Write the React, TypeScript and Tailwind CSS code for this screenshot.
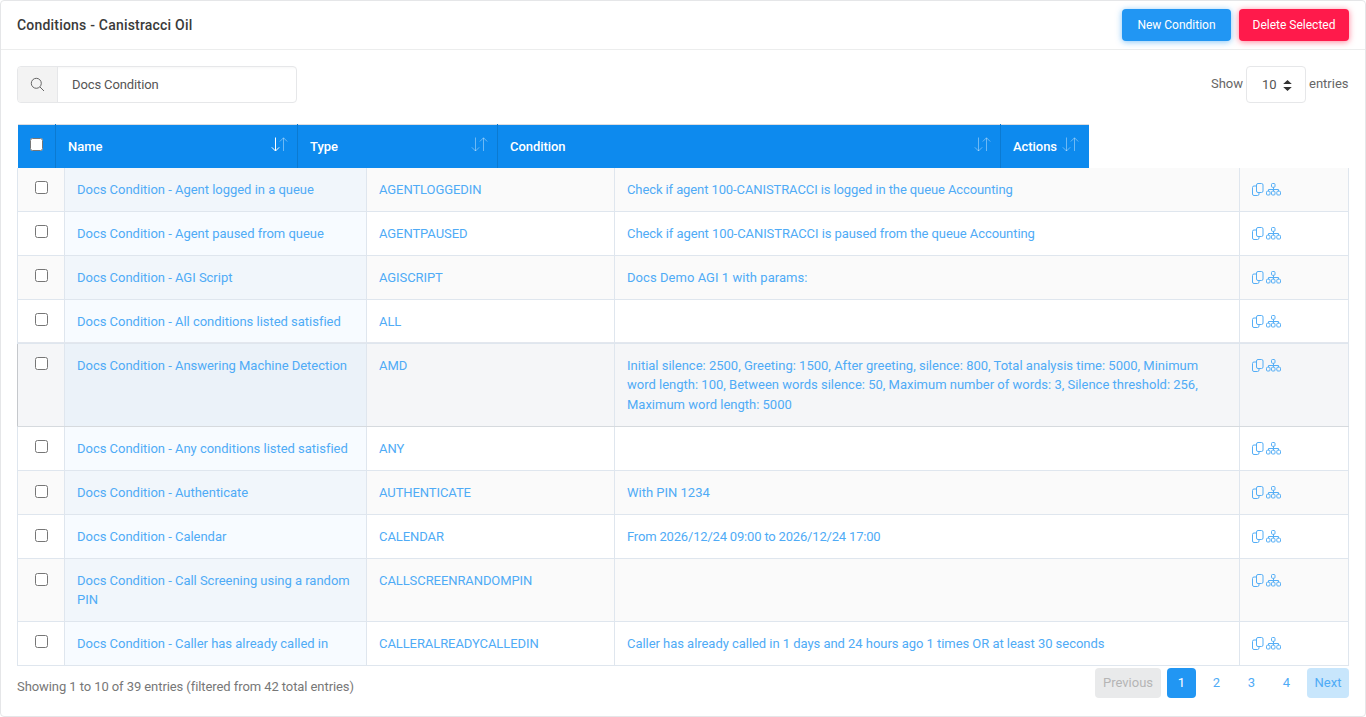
import React from "react";

const rows: { name: string; type: string; cond: string; tk: string; hover?: boolean; two?: boolean }[] = [
  { name: "Docs Condition - Agent logged in a queue", type: "AGENTLOGGEDIN", cond: "Check if agent 100-CANISTRACCI is logged in the queue Accounting", tk: "tracking-[-0.1px]" },
  { name: "Docs Condition - Agent paused from queue", type: "AGENTPAUSED", cond: "Check if agent 100-CANISTRACCI is paused from the queue Accounting", tk: "tracking-[-0.07px]" },
  { name: "Docs Condition - AGI Script", type: "AGISCRIPT", cond: "Docs Demo AGI 1 with params:", tk: "tracking-[0.05px]" },
  { name: "Docs Condition - All conditions listed satisfied", type: "ALL", cond: "", tk: "" },
  { name: "Docs Condition - Answering Machine Detection", type: "AMD", cond: "Initial silence: 2500, Greeting: 1500, After greeting, silence: 800, Total analysis time: 5000, Minimum word length: 100, Between words silence: 50, Maximum number of words: 3, Silence threshold: 256, Maximum word length: 5000", tk: "tracking-normal", hover: true },
  { name: "Docs Condition - Any conditions listed satisfied", type: "ANY", cond: "", tk: "" },
  { name: "Docs Condition - Authenticate", type: "AUTHENTICATE", cond: "With PIN 1234", tk: "tracking-normal" },
  { name: "Docs Condition - Calendar", type: "CALENDAR", cond: "From 2026/12/24 09:00 to 2026/12/24 17:00", tk: "tracking-[-0.18px]" },
  { name: "Docs Condition - Call Screening using a random PIN", type: "CALLSCREENRANDOMPIN", cond: "", tk: "", two: true },
  { name: "Docs Condition - Caller has already called in", type: "CALLERALREADYCALLEDIN", cond: "Caller has already called in 1 days and 24 hours ago 1 times OR at least 30 seconds", tk: "tracking-[-0.04px]" },
];

function CopyIcon() {
  return (
    <svg width="12" height="13" viewBox="0 0 12 13" fill="none" stroke="#55aef6" strokeWidth="1" className="block">
      <rect x="4.5" y="0.5" width="6.5" height="9" rx="1.5" />
      <path d="M4.5 3 H2 A1.5 1.5 0 0 0 .5 4.5 V11 A1.5 1.5 0 0 0 2 12.5 H5.5 A1.5 1.5 0 0 0 7 11 V9.5" />
    </svg>
  );
}

function TreeIcon() {
  return (
    <svg width="15" height="13" viewBox="0 0 15 13" fill="none" stroke="#55aef6" strokeWidth="1" className="block">
      <rect x="5.5" y="0.5" width="3.5" height="3.8" rx="1" />
      <path d="M7.5 4.3 V8 M2.5 8 V6.5 H12.5 V8" />
      <rect x="0.5" y="8.2" width="3.5" height="3.8" rx="1" />
      <rect x="5.5" y="8.2" width="3.5" height="3.8" rx="1" />
      <rect x="10.8" y="8.2" width="3.7" height="3.8" rx="1" />
    </svg>
  );
}

function SortIcon({ active }: { active?: boolean }) {
  return (
    <svg width="17" height="15" viewBox="0 0 17 15" fill="none" strokeWidth="1" className="block">
      <path stroke="#ffffff" strokeOpacity={active ? 1 : 0.4} d="M4.5 0.5 V14 M0.8 10.3 L4.5 14 L8.2 10.3" />
      <path stroke="#ffffff" strokeOpacity="0.4" d="M12.5 14 V0.8 M8.8 4.5 L12.5 0.8 L16.2 4.5" />
    </svg>
  );
}

function HeadCell({ label, w, active, iconGap }: { label: string; w: string; active?: boolean; iconGap?: boolean }) {
  return (
    <th className={`${w} h-[43px] border-r border-[#0b7ad1] p-0 pl-[12.5px] pr-[9px] text-left align-middle font-medium tracking-[-0.05px] last:border-r-0`}>
      <div className={`flex items-center ${iconGap ? "gap-[5px]" : "justify-between"}`}>
        <span className="pt-px">{label}</span>
        <span className="-mt-[3px]"><SortIcon active={active} /></span>
      </div>
    </th>
  );
}

export default function App() {
  return (
    <div className="h-[717px] w-[1366px] overflow-hidden bg-white font-['Roboto',sans-serif] text-[13px] leading-[19.5px] text-[#333]">
      <div className="h-[717px] rounded-[4px] border border-[#e5e6e8]">
        <div className="flex h-[49px] items-center justify-between border-b border-[#eceded] pl-4 pr-4">
          <h1 className="text-sm font-medium tracking-[0.2px] text-[#3a3a3a]">Conditions - Canistracci Oil</h1>
          <div className="flex gap-2">
            <button className="h-8 w-[109px] rounded-[4px] bg-[#2196f3] text-xs text-white shadow-[0_1px_6px_rgba(33,150,243,0.55)]">New Condition</button>
            <button className="h-8 w-[110px] rounded-[4px] bg-[#ff1a4b] text-xs text-white shadow-[0_1px_6px_rgba(255,23,68,0.55)]">Delete Selected</button>
          </div>
        </div>

        <div className="px-4 pt-4">
          <div className="flex items-start justify-between">
            <div className="flex h-[37px] w-[280px] overflow-hidden rounded-[4px] border border-[#e6e7e9]">
              <div className="flex w-10 items-center justify-center border-r border-[#e6e7e9] bg-[#f3f3f3]">
                <svg width="15" height="15" viewBox="0 0 15 15" fill="none" stroke="#666" strokeWidth="1">
                  <circle cx="6.3" cy="6.3" r="5" />
                  <path d="M10 10 L14 14" />
                </svg>
              </div>
              <input readOnly value="Docs Condition" className="min-w-0 flex-1 pl-[14px] text-[13px] tracking-[-0.12px] text-[#555] shadow-[inset_0_3px_3px_-2px_rgba(0,0,0,0.04)] outline-none" />
            </div>
            <div className="flex items-center text-[#666]">
              <span className="-mt-[2px]">Show</span>
              <div className="relative ml-[3px] mr-[3px] h-[37px] w-[60px]">
                <select defaultValue="10" className="h-full w-full appearance-none rounded-[4px] border border-[#e6e7e9] bg-white pl-[15px] text-[13px] text-[#555] outline-none">
                  <option value="10">10</option>
                </select>
                <svg width="9" height="11" viewBox="0 0 9 11" className="absolute right-[14px] top-[14px]" fill="#333">
                  <path d="M4.5 0 L8.8 4 H.2 Z M.2 7 H8.8 L4.5 11 Z" />
                </svg>
              </div>
              <span className="-mt-[2px] w-[40px]">entries</span>
            </div>
          </div>

          <table className="ml-px mt-[21px] table-fixed border-collapse border-t border-[#dcdde0] bg-[#0d8aee] text-white">
            <thead>
              <tr>
                <th className="h-[43px] w-[37px] border-r border-[#0b7ad1] p-0 align-middle">
                  <input type="checkbox" className="-mt-1 ml-[12px] block h-[13px] w-[13px]" />
                </th>
                <HeadCell label="Name" w="w-[242px]" active />
                <HeadCell label="Type" w="w-[200px]" />
                <HeadCell label="Condition" w="w-[503px]" />
                <HeadCell label="Actions" w="w-[89px]" iconGap />
              </tr>
            </thead>
          </table>

          <table className="w-[1331px] table-fixed border-collapse text-[#4fabf6]">
            <colgroup>
              <col className="w-[47px]" />
              <col className="w-[302px]" />
              <col className="w-[248px]" />
              <col className="w-[625px]" />
              <col className="w-[109px]" />
            </colgroup>
            <tbody>
              {rows.map((r, i) => {
                const odd = i % 2 === 0;
                const rowBg = r.hover ? "bg-[#f5f6f8]" : odd ? "bg-[#fafafa]" : "bg-white";
                const nameBg = r.hover ? "bg-[#ebf2f9]" : odd ? "bg-[#f1f6fb]" : "bg-[#f7fbff]";
                const pad = r.two ? "pt-3 pb-[11px]" : "pt-3 pb-[11.5px]";
                const edge = r.hover ? "border-b-[#d6dade]" : "";
                const boxTop = i >= 6 && i <= 8 ? "mt-[2px]" : "mt-px";
                return (
                  <tr key={r.name} className={`${rowBg} ${r.hover ? "shadow-[0_1px_0_#d6dade,0_-1px_0_#e3e7ee]" : ""}`}>
                    <td className={`border border-t-0 border-[#dfe6ee] px-0 align-top ${r.hover ? "border-l-[#c5c8cc]" : ""} ${edge} ${pad}`}>
                      <input type="checkbox" className={`ml-[17px] block h-[13px] w-[13px] ${boxTop}`} />
                    </td>
                    <td className={`${nameBg} border border-t-0 border-[#dfe6ee] px-3 align-top tracking-[-0.02px] ${edge} ${pad}`}>{r.name}</td>
                    <td className={`border border-t-0 border-[#dfe6ee] px-3 align-top tracking-[-0.08px] ${edge} ${pad}`}>{r.type}</td>
                    <td className={`border border-t-0 border-[#dfe6ee] px-3 align-top ${r.tk} ${edge} ${pad}`}>{r.cond}</td>
                    <td className={`border border-t-0 border-[#dfe6ee] px-3 align-top ${edge} ${pad}`}>
                      <div className="flex items-start gap-[2px] pt-[3px]">
                        <CopyIcon />
                        <TreeIcon />
                      </div>
                    </td>
                  </tr>
                );
              })}
            </tbody>
          </table>

          <div className="flex items-start justify-between pt-[2px]">
            <div className="pt-[9px] tracking-[-0.08px] text-[#777]">Showing 1 to 10 of 39 entries (filtered from 42 total entries)</div>
            <div className="flex items-center">
              <span className="flex h-[30px] w-[66px] items-center justify-center rounded-[4px] bg-[#e9eaeb] pt-px text-[#b5b5b5]">Previous</span>
              <span className="ml-[6px] flex h-[30px] w-[29px] items-center justify-center rounded-[4px] bg-[#2196f3] pt-px text-white">1</span>
              <span className="ml-[6px] flex h-[30px] w-[29px] items-center justify-center pt-px text-[#4fabf6]">2</span>
              <span className="ml-[6px] flex h-[30px] w-[29px] items-center justify-center pt-px text-[#4fabf6]">3</span>
              <span className="ml-[6px] flex h-[30px] w-[29px] items-center justify-center pt-px text-[#4fabf6]">4</span>
              <span className="ml-[6px] flex h-[30px] w-[42px] items-center justify-center rounded-[4px] bg-[#c8e6fc] pt-px text-[#4fabf6]">Next</span>
            </div>
          </div>
        </div>
      </div>
    </div>
  );
}
